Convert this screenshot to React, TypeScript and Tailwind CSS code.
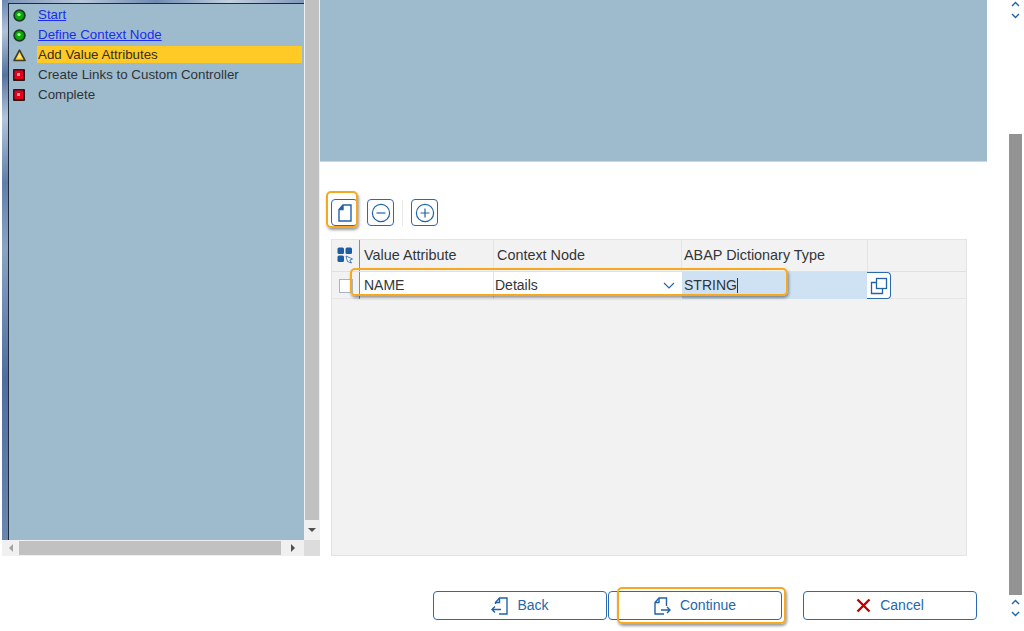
import type { ReactNode } from 'react';

const BLUE = '#2263a8';

function GreenDot() {
  return (
    <svg width="13" height="13" viewBox="0 0 13 13">
      <circle cx="6.5" cy="6.5" r="6.2" fill="#1d3a24" />
      <circle cx="6.5" cy="6.5" r="4.5" fill="#0aa80a" />
      <circle cx="6" cy="5.6" r="1.7" fill="#a8f590" />
    </svg>
  );
}

function YellowTriangle() {
  return (
    <svg width="13" height="13" viewBox="0 0 13 13">
      <path d="M6.5 1.2 L12 11.5 L1 11.5 Z" fill="#fbd23a" stroke="#3f3b2c" strokeWidth="1.6" strokeLinejoin="round" />
      <path d="M6.5 4.5 L8.6 9 L4.4 9 Z" fill="#ffe88a" />
    </svg>
  );
}

function RedSquare() {
  return (
    <svg width="12" height="12" viewBox="0 0 12 12">
      <rect x="0" y="0" width="12" height="12" rx="1" fill="#2c1a1a" />
      <rect x="1.5" y="1.5" width="8.5" height="8.5" fill="#e4001a" />
      <rect x="4" y="4" width="3" height="3" fill="#ff9aa0" />
    </svg>
  );
}

function StepRow({ icon, active, link, children }: { icon: ReactNode; active?: boolean; link?: boolean; children: ReactNode }) {
  return (
    <div className="flex h-5 items-center">
      <div className="flex w-[28px] shrink-0 items-center pl-[4px]">{icon}</div>
      <div
        className={
          active
            ? 'mb-[1px] flex h-[17px] flex-1 items-center bg-[#ffc926] pl-[1px] pt-[1px] text-[13.33px] text-[#33301f]'
            : link
              ? 'pl-[1px] text-[13.33px] text-[#1c2cf0] underline'
              : 'pl-[1px] text-[13.33px] text-[#2f3338]'
        }
      >
        {children}
      </div>
    </div>
  );
}

function ToolButton({ children }: { children: ReactNode }) {
  return (
    <button className="flex h-[27px] w-[27px] items-center justify-center rounded-[4px] border border-[#2a6bb0] bg-white">
      {children}
    </button>
  );
}

function FooterButton({ icon, label }: { icon: ReactNode; label: string }) {
  return (
    <button className="flex h-[29px] w-[174px] items-center justify-center gap-[9px] rounded-[4px] border border-[#2a6bb0] bg-white text-[14px] text-[#2467ad]">
      {icon}
      <span>{label}</span>
    </button>
  );
}

function Chevrons() {
  return (
    <div className="flex h-[18px] flex-col items-center justify-between">
      <svg width="9" height="6" viewBox="0 0 9 6" fill="none" stroke={BLUE} strokeWidth="1.4">
        <path d="M1 5 L4.5 1.5 L8 5" />
      </svg>
      <svg width="9" height="6" viewBox="0 0 9 6" fill="none" stroke={BLUE} strokeWidth="1.4">
        <path d="M1 1 L4.5 4.5 L8 1" />
      </svg>
    </div>
  );
}

function Highlight({ className }: { className: string }) {
  return <div className={`pointer-events-none absolute rounded-[5px] border-[2px] border-[#f6a81e] shadow-[1px_2px_3px_rgba(0,0,0,0.4)] ${className}`} />;
}

export default function App() {
  return (
    <div className="relative flex h-[631px] w-[1024px] overflow-hidden bg-white font-['Liberation_Sans',Arial,sans-serif]">
      {/* wizard step tree */}
      <div className="flex h-[556px] w-[320px] shrink-0 flex-col pl-[2px]">
        <div className="flex min-h-0 flex-1">
          <div className="w-[6px] bg-[linear-gradient(165deg,#6c88b2_0%,#b0c2d8_6%,#55739f_14%,#b3c5da_22%,#5f7ea9_34%,#8ba4c4_46%,#4f6e9f_70%,#6a86b0_100%)]" />
          <div className="flex flex-1 flex-col">
            <div className="h-[3px] bg-[linear-gradient(90deg,#7f97ba,#b7c6da,#6f8ab1,#c3d0e0,#7f97ba)]" />
            <div className="flex-1 border-l border-t border-[#1e2b3f] bg-[#9dbbcd] pr-[2px] pt-[1px]">
              <StepRow icon={<GreenDot />} link>Start</StepRow>
              <StepRow icon={<GreenDot />} link>Define Context Node</StepRow>
              <StepRow icon={<YellowTriangle />} active>Add Value Attributes</StepRow>
              <StepRow icon={<RedSquare />}>Create Links to Custom Controller</StepRow>
              <StepRow icon={<RedSquare />}>Complete</StepRow>
            </div>
          </div>
          <div className="flex w-[16px] flex-col bg-[#f0f0f0]">
            <div className="ml-[1px] w-[14px] flex-1 bg-[#c1c1c1]" />
            <div className="flex h-[20px] items-center justify-center">
              <div className="h-0 w-0 border-x-[4px] border-t-[4px] border-x-transparent border-t-[#505050]" />
            </div>
          </div>
        </div>
        <div className="flex h-[16px] bg-[#f0f0f0]">
          <div className="flex w-[17px] items-center justify-center">
            <div className="h-0 w-0 border-y-[4px] border-r-[4px] border-y-transparent border-r-[#a3a3a3]" />
          </div>
          <div className="my-[1px] w-[262px] bg-[#c1c1c1]" />
          <div className="flex flex-1 items-center justify-center">
            <div className="h-0 w-0 border-y-[4px] border-l-[4px] border-y-transparent border-l-[#505050]" />
          </div>
          <div className="w-[16px] bg-[#dcdcdc]" />
        </div>
      </div>

      {/* main area */}
      <div className="flex w-[667px] shrink-0 flex-col">
        <div className="h-[162px] border-b border-[#c5d8e4] bg-[#9dbbcd]" />
        <div className="flex items-center pl-[11px] pt-[37px]">
          <ToolButton>
            <svg width="16" height="18" viewBox="0 0 16 18" fill="none" stroke={BLUE} strokeWidth="1.4">
              <path d="M6 1 H14 V17 H2 V5.5 Z" />
              <path d="M6 1 V5.5 H2" fill={BLUE} />
            </svg>
          </ToolButton>
          <div className="ml-[9px]">
            <ToolButton>
              <svg width="20" height="20" viewBox="0 0 20 20" fill="none" stroke={BLUE} strokeWidth="1.2">
                <circle cx="10" cy="10" r="8.6" />
                <path d="M5.5 10 H14.5" />
              </svg>
            </ToolButton>
          </div>
          <div className="mx-[8px] h-[26px] w-px bg-[#e8e8e8]" />
          <ToolButton>
            <svg width="20" height="20" viewBox="0 0 20 20" fill="none" stroke={BLUE} strokeWidth="1.2">
              <circle cx="10" cy="10" r="8.6" />
              <path d="M5.5 10 H14.5 M10 5.5 V14.5" />
            </svg>
          </ToolButton>
        </div>

        {/* attributes table */}
        <div className="ml-[11px] mt-[13px] flex h-[317px] w-[636px] flex-col border border-[#e4e4e4] bg-[#f2f2f2] text-[14px] text-[#32363a]">
          <div className="grid h-[32px] grid-cols-[28px_134px_188px_186px_1fr] items-center border-b border-[#e0e0e0] text-[14.4px]">
            <div className="flex h-full items-center justify-center border-r border-[#8c8c8c]">
              <svg width="17" height="17" viewBox="0 0 17 17">
                <rect x="0.5" y="0.5" width="6.5" height="6.5" rx="1.5" fill="#1d5da5" />
                <rect x="8.5" y="0.5" width="6.5" height="6.5" rx="1.5" fill="#1d5da5" />
                <rect x="0.5" y="8.5" width="6.5" height="6.5" rx="1.5" fill="#1d5da5" />
                <path d="M9 9 L15.5 12 L12.8 13 L14.5 16 L10.5 14.5 Z" fill="#fff" stroke="#1d5da5" strokeWidth="0.8" />
              </svg>
            </div>
            <div className="flex h-full items-center border-r border-[#e4e4e4] pl-[4px]">Value Attribute</div>
            <div className="flex h-full items-center border-r border-[#e4e4e4] pl-[3px]">Context Node</div>
            <div className="flex h-full items-center border-r border-[#e4e4e4] pl-[2px]">ABAP Dictionary Type</div>
            <div />
          </div>
          <div className="grid h-[27px] grid-cols-[28px_134px_188px_186px_1fr] border-b border-[#e6e6e6]">
            <div className="flex items-center justify-center border-r border-[#8c8c8c]">
              <div className="h-[14px] w-[14px] border border-[#a6b5c4] bg-white" />
            </div>
            <div className="flex items-center border-r border-[#e4e4e4] bg-white pb-[1px] pl-[4px]">NAME</div>
            <div className="flex items-center justify-between bg-white pb-[1px] pl-[1px] pr-[7px]">
              <span>Details</span>
              <svg width="12" height="7" viewBox="0 0 12 7" fill="none" stroke={BLUE} strokeWidth="1.1">
                <path d="M1 1 L6 6 L11 1" />
              </svg>
            </div>
            <div className="flex items-center bg-[#cfe2f3] pb-[1px] pl-[2px]">
              <span>STRING</span>
              <span className="h-[15px] w-px bg-[#32363a]" />
            </div>
            <div className="flex items-center">
              <button className="-ml-[1px] flex h-[27px] w-[24px] items-center justify-center rounded-r-[4px] border border-l-0 border-[#2a6bb0] bg-white">
                <svg width="18" height="18" viewBox="0 0 18 18" fill="none" stroke={BLUE} strokeWidth="1.3">
                  <rect x="6.5" y="1.5" width="10" height="10" />
                  <path d="M6.5 5.5 H1.5 V16.5 H12.5 V11.5" />
                </svg>
              </button>
            </div>
          </div>
        </div>

        {/* wizard buttons */}
        <div className="flex items-center pl-[113px] pt-[35px]">
          <FooterButton
            label="Back"
            icon={
              <svg width="17" height="18" viewBox="0 0 17 18" fill="none" stroke={BLUE} strokeWidth="1.4">
                <path d="M4.5 7 V5.5 L8.5 1 H16 V17 H8" />
                <path d="M8.5 1 V5.5 H4.5" />
                <path d="M10 12.5 H1 M4 9.5 L1 12.5 L4 15.5" />
              </svg>
            }
          />
          <div className="w-px" />
          <FooterButton
            label="Continue"
            icon={
              <svg width="17" height="18" viewBox="0 0 17 18" fill="none" stroke={BLUE} strokeWidth="1.4">
                <path d="M12.5 9 V1 H5 L1 5.5 V17 H10" />
                <path d="M5 1 V5.5 H1" />
                <path d="M7 13 H16 M13 10 L16 13 L13 16" />
              </svg>
            }
          />
          <div className="w-[21px]" />
          <FooterButton
            label="Cancel"
            icon={
              <svg width="15" height="15" viewBox="0 0 15 15" fill="none" stroke="#bb0000" strokeWidth="2.4">
                <path d="M1.5 1.5 L13.5 13.5 M13.5 1.5 L1.5 13.5" />
              </svg>
            }
          />
        </div>
      </div>

      {/* page scrollbar */}
      <div className="ml-[22px] flex h-[631px] w-[13px] shrink-0 flex-col items-center">
        <div className="pt-[1px]"><Chevrons /></div>
        <div className="mt-[115px] h-[461px] w-[13px] shrink-0 bg-[#939393]" />
        <div className="pt-[4px]"><Chevrons /></div>
      </div>

      {/* orange tutorial callouts */}
      <Highlight className="left-[326px] top-[191px] h-[37px] w-[32px]" />
      <Highlight className="left-[350px] top-[268px] h-[28px] w-[438px]" />
      <Highlight className="left-[617px] top-[587px] h-[37px] w-[169px]" />
    </div>
  );
}
